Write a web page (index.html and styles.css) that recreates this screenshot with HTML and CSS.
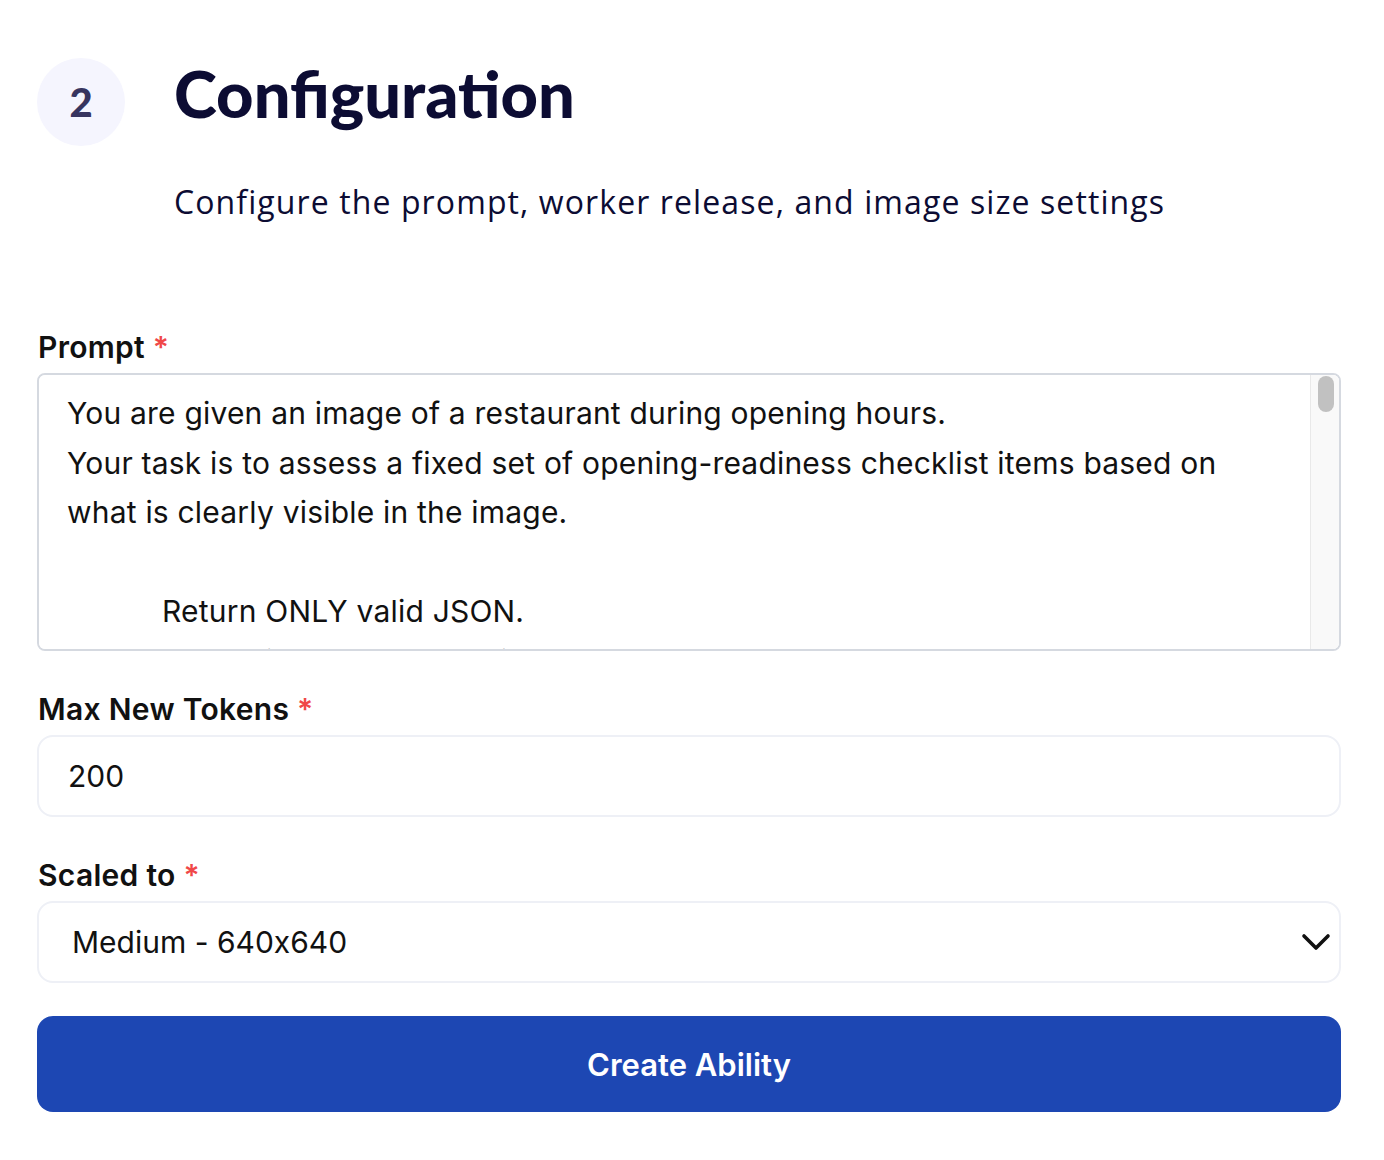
FILE: index.html
```html
<!DOCTYPE html>
<html lang="en">
<head>
<meta charset="utf-8">
<title>Configuration</title>
<link rel="stylesheet" href="styles.css">
</head>
<body>
<main class="page">
  <header class="step-header">
    <div class="step-badge">2</div>
    <h1 class="step-title">Configuration</h1>
  </header>
  <p class="step-subtitle">Configure the prompt, worker release, and image size settings</p>

  <form class="form">
    <div class="field field-prompt">
      <label class="field-label">Prompt <span class="req">*</span></label>
      <div class="textarea-wrap">
      <textarea class="textarea" spellcheck="false">You are given an image of a restaurant during opening hours.
Your task is to assess a fixed set of opening-readiness checklist items based on what is clearly visible in the image.

           Return ONLY valid JSON.
           Do not include explanations, markdown, or extra text.

           Checklist items:
           1. lights_on: Are the interior lights switched on?
           2. door_open: Is the entrance door open or unlocked?
           3. tables_set: Are the tables set with cutlery and napkins?
           4. chairs_down: Are all chairs placed on the floor?
           5. floor_clean: Is the floor free of visible debris?
           6. counter_clean: Is the counter clear and tidy?
           7. staff_present: Is at least one staff member visible?
           8. menu_displayed: Is a menu board or menu visible?
           9. open_sign: Is an "Open" sign visible and lit?
           10. music_or_tv: Is a screen or speaker turned on?

           Rules:
           - Answer each item with "yes", "no", or "unclear".
           - Use "unclear" if the item cannot be determined.
           - Do not guess beyond what is visible.
           - Keep the keys exactly as listed above.

           Output format:
           {
             "lights_on": "yes" | "no" | "unclear",
             "door_open": "yes" | "no" | "unclear",
             "tables_set": "yes" | "no" | "unclear",
             "chairs_down": "yes" | "no" | "unclear",
             "floor_clean": "yes" | "no" | "unclear",
             "counter_clean": "yes" | "no" | "unclear",
             "staff_present": "yes" | "no" | "unclear",
             "menu_displayed": "yes" | "no" | "unclear",
             "open_sign": "yes" | "no" | "unclear",
             "music_or_tv": "yes" | "no" | "unclear"
           }

           Return the JSON object only.
</textarea>
        <div class="scroll-track" aria-hidden="true"><div class="scroll-thumb"></div></div>
      </div>
    </div>

    <div class="field">
      <label class="field-label">Max New Tokens <span class="req">*</span></label>
      <input class="input" type="text" value="200">
    </div>

    <div class="field field-last">
      <label class="field-label">Scaled to <span class="req">*</span></label>
      <div class="select-wrap">
        <select class="select">
          <option>Medium - 640x640</option>
          <option>Small - 320x320</option>
          <option>Large - 1280x1280</option>
        </select>
        <svg class="chevron" width="30" height="18" viewBox="0 0 30 18" aria-hidden="true">
          <path d="M3 3 L15 15 L27 3" fill="none" stroke="#111111" stroke-width="3.6" stroke-linecap="round" stroke-linejoin="round"/>
        </svg>
      </div>
    </div>

    <button type="button" class="submit">Create Ability</button>
  </form>
</main>
</body>
</html>
```

FILE: styles.css
```css
* { box-sizing: border-box; }

html, body {
  margin: 0;
  padding: 0;
  background: #ffffff;
}

body {
  font-family: "Inter", "Liberation Sans", sans-serif;
  font-feature-settings: "calt" 0;
  color: #111111;
}

.page {
  width: 1304px;
  margin-left: 37px;
  padding-top: 58px;
}

.step-header {
  display: flex;
  align-items: center;
  gap: 49px;
}

.step-badge {
  width: 88px;
  height: 88px;
  border-radius: 50%;
  background: #f5f5fe;
  color: #37345f;
  font-family: "Lato", "Liberation Sans", sans-serif;
  font-weight: 900;
  font-size: 40px;
  display: flex;
  align-items: center;
  justify-content: center;
  flex-shrink: 0;
}

.step-title {
  margin: 0;
  font-family: "Lato", "Liberation Sans", sans-serif;
  font-weight: 900;
  font-size: 65px;
  line-height: 1;
  color: #0c0c33;
  margin-top: -18px;
}

.step-subtitle {
  margin: 36px 0 0 137px;
  font-family: "Open Sans", "Liberation Sans", sans-serif;
  font-weight: 400;
  font-size: 32px;
  letter-spacing: 1.1px;
  line-height: 40px;
  color: #0c0c33;
}

.form {
  margin-top: 105px;
  display: flex;
  flex-direction: column;
}

.field {
  display: flex;
  flex-direction: column;
  margin-bottom: 38px;
}

.field-last {
  margin-bottom: 33px;
}

.field-label {
  font-size: 30px;
  line-height: 40px;
  font-weight: 600;
  letter-spacing: 0.3px;
  color: #111111;
  margin-bottom: 6px;
  padding-left: 1px;
}

.req {
  color: #f04848;
}

.textarea-wrap {
  position: relative;
}

.textarea {
  display: block;
  width: 100%;
  height: 278px;
  resize: none;
  border: 2px solid #d5d9e0;
  border-radius: 8px;
  padding: 14px 80px 14px 28px;
  font-family: "Inter", "Liberation Sans", sans-serif;
  font-feature-settings: "calt" 0;
  font-size: 30px;
  letter-spacing: 0.2px;
  line-height: 49.5px;
  color: #111111;
  overflow-y: auto;
  scrollbar-width: none;
  outline: none;
  background: #ffffff;
}

.textarea::-webkit-scrollbar {
  display: none;
}

.scroll-track {
  position: absolute;
  top: 2px;
  right: 2px;
  bottom: 2px;
  width: 29px;
  background: #f9f9f9;
  border-left: 1px solid #e9e9e9;
  border-radius: 0 6px 6px 0;
  pointer-events: none;
}

.scroll-thumb {
  margin: 1px 0 0 7px;
  width: 16px;
  height: 36px;
  border-radius: 8px;
  background: #c1c1c1;
}

.input {
  display: block;
  width: 100%;
  height: 82px;
  border: 2px solid #eef0f6;
  border-radius: 16px;
  padding: 0 29px;
  font-family: "Inter", "Liberation Sans", sans-serif;
  font-feature-settings: "calt" 0;
  font-size: 30px;
  color: #111111;
  background: #ffffff;
  outline: none;
}

.select-wrap {
  position: relative;
}

.select {
  display: block;
  width: 100%;
  height: 82px;
  border: 2px solid #eef0f6;
  border-radius: 16px;
  padding: 0 33px;
  font-family: "Inter", "Liberation Sans", sans-serif;
  font-feature-settings: "calt" 0;
  font-size: 30px;
  color: #111111;
  background: #ffffff;
  -webkit-appearance: none;
  appearance: none;
  outline: none;
}

.chevron {
  position: absolute;
  right: 10px;
  top: 32px;
  pointer-events: none;
}

.submit {
  display: block;
  width: 100%;
  height: 96px;
  border: none;
  border-radius: 16px;
  background: #1d47b3;
  color: #ffffff;
  font-family: "Inter", "Liberation Sans", sans-serif;
  font-size: 31px;
  font-weight: 600;
  cursor: pointer;
}
```
